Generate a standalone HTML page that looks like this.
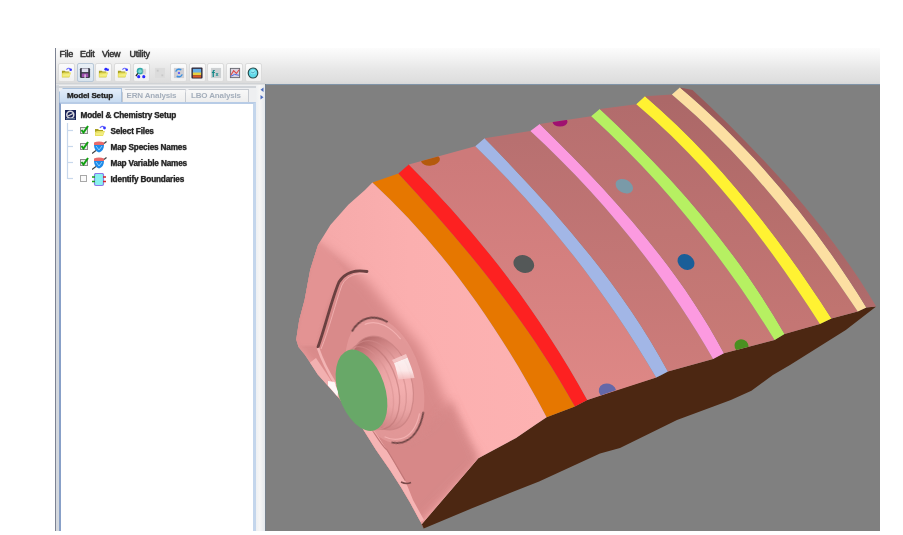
<!DOCTYPE html>
<html><head><meta charset="utf-8">
<style>
html,body{margin:0;padding:0;background:#fff;width:903px;height:535px;overflow:hidden;position:relative;font-family:"Liberation Sans",sans-serif;}
.abs{position:absolute;}
#bar{position:absolute;left:56px;top:48px;width:824px;height:36px;background:linear-gradient(#fcfcfc,#f2f2f2 30%,#e6e6e6 62%,#dedede 92%,#d8d8d8);}
#lb1{position:absolute;left:55px;top:48px;width:1px;height:483px;background:#7c8292;}
#lb2{position:absolute;left:56px;top:84px;width:3px;height:447px;background:#d4d8de;}
.menu{position:absolute;top:49px;font-size:9px;color:#2a2a2a;letter-spacing:-0.25px;-webkit-text-stroke:0.35px #3a3a3a;text-shadow:0 0 1px rgba(0,0,0,0.5);}
.tb{position:absolute;top:63px;width:15px;height:17px;border:1px solid #dcdcdc;border-radius:2px;background:linear-gradient(#fbfbfb,#f0f0f0);}
.tb svg{position:absolute;left:1px;top:2px;}
#view{position:absolute;left:265px;top:85px;width:615px;height:446px;background:#808080;overflow:hidden;}
#vedge{position:absolute;left:265px;top:84px;width:1px;height:447px;background:#76808a;}
#sep{position:absolute;left:56px;top:83px;width:209px;height:2px;background:linear-gradient(#c8ccd0,#e8e8e8);}
#vtop{position:absolute;left:265px;top:84px;width:615px;height:1px;background:#8094a8;}
#tabs{position:absolute;left:56px;top:85px;width:209px;height:446px;background:#eeeff1;}
#split{position:absolute;left:256px;top:85px;width:9px;height:446px;background:linear-gradient(90deg,#eef0f2,#f6f6f6 40%,#e4e8ec);}
.tab{position:absolute;top:89px;height:12px;font-size:8px;font-weight:bold;color:#a4aebb;border:1px solid #c6cad0;border-bottom:none;background:linear-gradient(#f8f8f8,#eeeeee);white-space:nowrap;letter-spacing:-0.15px;}
#panel{position:absolute;left:59px;top:101.5px;width:192px;height:427px;background:#fff;border-left:2px solid #88a0c8;border-top:2px solid #b8cce6;border-right:3px solid #c4d6ec;}
.tr{position:absolute;font-size:8.2px;font-weight:bold;color:#222;white-space:nowrap;letter-spacing:-0.15px;-webkit-text-stroke:0.25px #333;text-shadow:0 0 1px rgba(0,0,0,0.45);}
.ic{position:absolute;}
</style></head><body>
<div id="ui" style="position:absolute;left:0;top:0;width:903px;height:535px;will-change:transform">
<div id="bar"></div>
<div id="lb1"></div>
<div class="menu" style="left:59.5px">File</div>
<div class="menu" style="left:80px">Edit</div>
<div class="menu" style="left:102px">View</div>
<div class="menu" style="left:129.5px">Utility</div>
<div class="tb" style="left:58.0px"><svg width="12" height="12" viewBox="0 0 13 13" style="left:1.5px;top:2.5px"><path d="M1,4 L4,4 L5,5 L9,5 L9,11 L1,11 Z" fill="#a8a020"/><path d="M1,7 L3,6 L11,6 L9,11 L1,11 Z" fill="#e8e060"/><path d="M2,8 L10,7 L9,10 L2,10 Z" fill="#f4f08a" opacity="0.8"/><path d="M6,3 C7,1 9,1 10,2" stroke="#6a6aff" stroke-width="1.3" fill="none"/><circle cx="10.5" cy="3" r="1.4" fill="#3434ff"/></svg></div>
<div class="tb" style="left:76.7px;background:linear-gradient(#eaf0f6,#d8e4ee);border-color:#b8c8d8"><svg width="12" height="12" viewBox="0 0 13 13" style="left:1.5px;top:2.5px"><rect x="1" y="1" width="11" height="11" rx="1.5" fill="#3a3a48"/><rect x="3" y="1.5" width="7" height="4" fill="#e0e0f0"/><rect x="3" y="7" width="7" height="4" fill="#a050b0"/><rect x="6" y="8" width="1.2" height="4" fill="#f0f0f0"/></svg></div>
<div class="tb" style="left:95.3px"><svg width="12" height="12" viewBox="0 0 13 13" style="left:1.5px;top:2.5px"><path d="M1,4 L4,4 L5,5 L9,5 L9,11 L1,11 Z" fill="#a8a020"/><path d="M1,7 L3,6 L11,6 L9,11 L1,11 Z" fill="#e8e060"/><path d="M2,8 L10,7 L9,10 L2,10 Z" fill="#f4f08a" opacity="0.8"/><path d="M6,3 C7,1 9,1 10,2" stroke="#0000" stroke-width="1.3" fill="none"/><circle cx="10.5" cy="3" r="1.4" fill="#3434ff"/><circle cx="8.5" cy="2.5" r="1.6" fill="#2a2aff"/></svg></div>
<div class="tb" style="left:114.0px"><svg width="12" height="12" viewBox="0 0 13 13" style="left:1.5px;top:2.5px"><path d="M1,4 L4,4 L5,5 L9,5 L9,11 L1,11 Z" fill="#a8a020"/><path d="M1,7 L3,6 L11,6 L9,11 L1,11 Z" fill="#e8e060"/><path d="M2,8 L10,7 L9,10 L2,10 Z" fill="#f4f08a" opacity="0.8"/><path d="M6,3 C7,1 9,1 10,2" stroke="#6a6aff" stroke-width="1.3" fill="none"/><circle cx="10.5" cy="3" r="1.4" fill="#3434ff"/></svg></div>
<div class="tb" style="left:132.7px"><svg width="12" height="12" viewBox="0 0 13 13" style="left:1.5px;top:2.5px"><circle cx="5.5" cy="4.5" r="3.6" fill="#30a8a8"/><circle cx="5.5" cy="4.5" r="2" fill="#80d8d0"/><path d="M3,7 L1,10" stroke="#202020" stroke-width="1.4"/><circle cx="4" cy="10.5" r="1.7" fill="#2a2aff"/><circle cx="9.5" cy="10.5" r="1.7" fill="#2a2aff"/><rect x="8" y="2" width="4" height="6" fill="#c8c8c8" opacity="0.6"/></svg></div>
<div class="tb" style="left:151.4px;border-color:transparent;background:transparent"><svg width="12" height="12" viewBox="0 0 13 13" style="left:1.5px;top:2.5px"><rect x="1" y="1" width="11" height="11" fill="#dcdcdc"/><rect x="3" y="3" width="2" height="2" fill="#c8c8c8"/><rect x="8" y="8" width="2" height="2" fill="#c8c8c8"/></svg></div>
<div class="tb" style="left:170.0px"><svg width="12" height="12" viewBox="0 0 13 13" style="left:1.5px;top:2.5px"><rect x="1" y="1" width="11" height="11" fill="#cfcfd4"/><path d="M3,5 C4,2 7,2 9,3" stroke="#3a90e0" stroke-width="1.6" fill="none"/><path d="M10,8 C9,11 6,11 4,10" stroke="#3a90e0" stroke-width="1.6" fill="none"/><circle cx="6.5" cy="6.5" r="1.2" fill="#5050ff"/></svg></div>
<div class="tb" style="left:188.7px"><svg width="12" height="12" viewBox="0 0 13 13" style="left:1.5px;top:2.5px"><rect x="0.5" y="0.5" width="12" height="12" rx="1" fill="#302838"/><rect x="2" y="2" width="9" height="5" fill="#6ab0e8"/><rect x="2" y="6" width="9" height="3" fill="#e8d040"/><rect x="2" y="9" width="9" height="2.5" fill="#d85828"/></svg></div>
<div class="tb" style="left:207.4px"><svg width="12" height="12" viewBox="0 0 13 13" style="left:1.5px;top:2.5px"><rect x="1" y="1" width="11" height="11" fill="#cdd0d2"/><text x="2" y="10.5" font-size="10" font-weight="bold" fill="#108888" font-family="Liberation Sans">f</text><text x="6" y="10" font-size="6" font-weight="bold" fill="#108888" font-family="Liberation Sans">x</text></svg></div>
<div class="tb" style="left:226.0px"><svg width="12" height="12" viewBox="0 0 13 13" style="left:1.5px;top:2.5px"><rect x="1" y="1" width="11" height="11" fill="#686870"/><rect x="2" y="2" width="9" height="9" fill="#d8d4e0"/><path d="M2,9 L5,4 L8,7 L11,3" stroke="#e04848" stroke-width="1.2" fill="none"/><path d="M2,10 L6,8 L11,9" stroke="#4860e0" stroke-width="1" fill="none"/></svg></div>
<div class="tb" style="left:244.7px"><svg width="12" height="12" viewBox="0 0 13 13" style="left:1.5px;top:2.5px"><ellipse cx="6.5" cy="6.5" rx="5.8" ry="6" fill="#284848"/><ellipse cx="6.5" cy="6.5" rx="4.6" ry="4.8" fill="#60d8e8"/><ellipse cx="6.5" cy="5.5" rx="2.8" ry="2.4" fill="#90ecf6"/><path d="M4.5,5.5 L6.5,6.5 L8.5,5" stroke="#3a8aa8" stroke-width="0.8" fill="none"/></svg></div>
<div id="tabs"></div>
<div id="lb2"></div>
<div id="sep"></div>
<div id="split"></div>
<svg class="abs" style="left:258px;top:86px" width="7" height="16"><path d="M5.5,1.5 L2.5,3.8 L5.5,6 Z" fill="#4a6cc0"/><path d="M2.5,9 L5.5,11.3 L2.5,13.5 Z" fill="#4a6cc0"/></svg>
<div class="abs" style="left:56px;top:86px;width:200px;height:2px;background:#cfd3d8"></div>
<div class="tab" style="left:121.5px;width:62px;clip-path:polygon(4px 0,100% 0,100% 100%,0 100%,0 4px)"><span style="position:absolute;left:4px;top:1px">ERN Analysis</span></div>
<div class="tab" style="left:185px;width:62px;clip-path:polygon(4px 0,100% 0,100% 100%,0 100%,0 4px)"><span style="position:absolute;left:5px;top:1px">LBO Analysis</span></div>
<div class="tab" style="left:59px;width:61px;top:88px;clip-path:polygon(4px 0,100% 0,100% 100%,0 100%,0 4px);height:14px;background:linear-gradient(#e4eefa,#c6daf0);color:#1e1e1e;border-color:#a8c0dc;"><span style="position:absolute;left:7px;top:2px;-webkit-text-stroke:0.25px #333;text-shadow:0 0 1px rgba(0,0,0,0.4)">Model Setup</span></div>
<div id="panel"></div>
<svg class="ic" style="left:65px;top:109.5px" width="11" height="10" viewBox="0 0 11 10"><rect x="0" y="0" width="11" height="10" fill="#1c2458"/><circle cx="5.3" cy="4.8" r="3.5" fill="none" stroke="#d8d8e0" stroke-width="1.5"/><path d="M3,6 L8,3.5" stroke="#e0e0e0" stroke-width="1.2"/><rect x="1" y="8" width="9" height="1.5" fill="#607090"/></svg>
<div class="tr" style="left:80.5px;top:111px">Model &amp; Chemistry Setup</div>
<svg class="ic" style="left:60px;top:120px" width="20" height="62"><path d="M7.5,3 L7.5,59" stroke="#c8d8ec" stroke-width="1.2"/><path d="M8,10.5 L13,10.5" stroke="#c8d8ec" stroke-width="1.2"/><path d="M8,26.5 L13,26.5" stroke="#c8d8ec" stroke-width="1.2"/><path d="M8,42.5 L13,42.5" stroke="#c8d8ec" stroke-width="1.2"/><path d="M8,58.5 L13,58.5" stroke="#c8d8ec" stroke-width="1.2"/></svg>
<svg class="ic" style="left:79.5px;top:125px" width="9" height="9" viewBox="0 0 9 9"><rect x="0.5" y="2.5" width="7" height="6" fill="#e8e8e8" stroke="#8c8c8c" stroke-width="1"/><path d="M1.5,5 L3.5,7.5 L8,1" stroke="#10a010" stroke-width="2" fill="none"/></svg>
<svg class="ic" style="left:94px;top:125px" width="13" height="13" viewBox="0 0 13 13"><path d="M1,4 L4,4 L5,5 L9,5 L9,11 L1,11 Z" fill="#a8a020"/><path d="M1,7 L3,6 L11,6 L9,11 L1,11 Z" fill="#e8e060"/><path d="M2,8 L10,7 L9,10 L2,10 Z" fill="#f4f08a" opacity="0.8"/><path d="M6,3 C7,1 9,1 10,2" stroke="#6a6aff" stroke-width="1.3" fill="none"/><circle cx="10.5" cy="3" r="1.4" fill="#3434ff"/></svg>
<div class="tr" style="left:110.5px;top:126.8px">Select Files</div>
<svg class="ic" style="left:79.5px;top:141px" width="9" height="9" viewBox="0 0 9 9"><rect x="0.5" y="2.5" width="7" height="6" fill="#e8e8e8" stroke="#8c8c8c" stroke-width="1"/><path d="M1.5,5 L3.5,7.5 L8,1" stroke="#10a010" stroke-width="2" fill="none"/></svg>
<svg class="ic" style="left:92px;top:140.5px" width="15" height="14" viewBox="0 0 15 14"><path d="M2,1.5 C5,0 9,0 12,1.5 L12,4 L2,4 Z" fill="#e86a6a"/><path d="M2,4 L12,4 C12,8 10,10.5 7,11.5 C4,10.5 2,8 2,4 Z" fill="#1f8ae8"/><path d="M4,5 L7,9 L10,5" stroke="#8ad0ff" stroke-width="1" fill="none"/><path d="M0,12.5 L4,9.5" stroke="#404040" stroke-width="1.2"/><path d="M12,2.5 L14.5,0.5" stroke="#404040" stroke-width="1.2"/></svg>
<div class="tr" style="left:110.5px;top:142.8px">Map Species Names</div>
<svg class="ic" style="left:79.5px;top:157px" width="9" height="9" viewBox="0 0 9 9"><rect x="0.5" y="2.5" width="7" height="6" fill="#e8e8e8" stroke="#8c8c8c" stroke-width="1"/><path d="M1.5,5 L3.5,7.5 L8,1" stroke="#10a010" stroke-width="2" fill="none"/></svg>
<svg class="ic" style="left:92px;top:156.5px" width="15" height="14" viewBox="0 0 15 14"><path d="M2,1.5 C5,0 9,0 12,1.5 L12,4 L2,4 Z" fill="#e86a6a"/><path d="M2,4 L12,4 C12,8 10,10.5 7,11.5 C4,10.5 2,8 2,4 Z" fill="#1f8ae8"/><path d="M4,5 L7,9 L10,5" stroke="#8ad0ff" stroke-width="1" fill="none"/><path d="M0,12.5 L4,9.5" stroke="#404040" stroke-width="1.2"/><path d="M12,2.5 L14.5,0.5" stroke="#404040" stroke-width="1.2"/></svg>
<div class="tr" style="left:110.5px;top:158.8px">Map Variable Names</div>
<svg class="ic" style="left:79.5px;top:173px" width="9" height="9" viewBox="0 0 9 9"><rect x="0.5" y="2.5" width="6" height="6" fill="#fafafa" stroke="#a8a8a8" stroke-width="1"/></svg>
<svg class="ic" style="left:92px;top:172.5px" width="15" height="14" viewBox="0 0 15 14"><rect x="2.5" y="0.5" width="9" height="12" rx="1.5" fill="#88f0f0" stroke="#8a7ae8" stroke-width="1.2"/><path d="M0,4 L3,4 M0,8.5 L3,8.5" stroke="#18a018" stroke-width="1.6"/><path d="M11,4 L14,4 M11,8.5 L14,8.5" stroke="#d02828" stroke-width="1.6"/></svg>
<div class="tr" style="left:110.5px;top:174.8px">Identify Boundaries</div>
</div>
<div id="view"></div>
<div id="vtop"></div>
<svg class="abs" style="left:0;top:0" width="903" height="535" viewBox="0 0 903 535">
<defs><clipPath id="vc"><rect x="265" y="85" width="615" height="446"/></clipPath></defs>
<g clip-path="url(#vc)">
<polygon points="421.5,524.5 478.3,458.3 516,438 535,425 546.6,417.3 574.9,406.5 587.3,399.9 616.4,389.9 656.2,377.5 661.6,375 667.9,371.6 713.1,359 723.9,353.2 774.6,340 784.5,334.1 800,329.4 819.9,323.9 831.4,318.4 857.8,311.4 866.3,307.4 876.2,306.4 876.2,306.4 845.8,330 790,364.9 772.9,375 751.4,390.8 730.9,400 677,420 620,448 600,453.6 539.1,481.4 466.7,510.4 423.7,528.6" fill="#4c2712"/>
<defs><linearGradient id="sg3" gradientUnits="userSpaceOnUse" x1="0" y1="160" x2="0" y2="400"><stop offset="0" stop-color="#cd7a7a"/><stop offset="1" stop-color="#de8886"/></linearGradient><linearGradient id="sg5" gradientUnits="userSpaceOnUse" x1="0" y1="140" x2="0" y2="370"><stop offset="0" stop-color="#b87070"/><stop offset="1" stop-color="#cd7c7a"/></linearGradient><linearGradient id="sg7" gradientUnits="userSpaceOnUse" x1="0" y1="120" x2="0" y2="345"><stop offset="0" stop-color="#b87070"/><stop offset="1" stop-color="#c87a76"/></linearGradient><linearGradient id="sg9" gradientUnits="userSpaceOnUse" x1="0" y1="105" x2="0" y2="325"><stop offset="0" stop-color="#b26c6c"/><stop offset="1" stop-color="#c47674"/></linearGradient><linearGradient id="sg11" gradientUnits="userSpaceOnUse" x1="0" y1="100" x2="0" y2="310"><stop offset="0" stop-color="#ac6868"/><stop offset="1" stop-color="#c07470"/></linearGradient><linearGradient id="sg13" gradientUnits="userSpaceOnUse" x1="0" y1="90" x2="0" y2="305"><stop offset="0" stop-color="#985858"/><stop offset="1" stop-color="#b06c6c"/></linearGradient></defs>
<path d="M372.4,182.4 C444.3,248.7 500.8,330.7 546.6,417.3 L574.9,406.5 C527.3,320.8 464.8,244.7 398.4,173.4 Z" fill="#e67700"/>
<path d="M398.4,173.4 C464.8,244.7 527.3,320.8 574.9,406.5 L587.3,399.9 C539.8,313.1 479.0,234.1 408.8,164.5 Z" fill="#fd2121"/>
<path d="M408.8,164.5 C479.0,234.1 539.8,313.1 587.3,399.9 L656.2,377.5 C606.4,292.6 546.1,214.9 475.3,146.3 Z" fill="url(#sg3)"/>
<path d="M475.3,146.3 C546.1,214.9 606.4,292.6 656.2,377.5 L667.9,371.6 C621.7,285.1 554.0,208.9 484.6,138.3 Z" fill="#a2b6e6"/>
<path d="M484.6,138.3 C554.0,208.9 621.7,285.1 667.9,371.6 L713.1,359.0 C664.4,273.8 602.4,197.4 530.4,131.0 Z" fill="url(#sg5)"/>
<path d="M530.4,131.0 C602.4,197.4 664.4,273.8 713.1,359.0 L723.9,353.2 C677.5,266.0 610.0,192.3 539.7,124.0 Z" fill="#fc9ae0"/>
<path d="M539.7,124.0 C610.0,192.3 677.5,266.0 723.9,353.2 L774.6,340.0 C723.8,257.6 662.4,180.7 591.2,116.3 Z" fill="url(#sg7)"/>
<path d="M591.2,116.3 C662.4,180.7 723.8,257.6 774.6,340.0 L784.5,334.1 C736.1,249.2 671.0,174.9 599.8,109.0 Z" fill="#b6f062"/>
<path d="M599.8,109.0 C671.0,174.9 736.1,249.2 784.5,334.1 L819.9,323.9 C768.4,243.8 709.8,165.7 636.3,104.3 Z" fill="url(#sg9)"/>
<path d="M636.3,104.3 C709.8,165.7 768.4,243.8 819.9,323.9 L831.4,318.4 C778.9,236.8 718.9,159.6 645.0,96.3 Z" fill="#fff232"/>
<path d="M645.0,96.3 C718.9,159.6 778.9,236.8 831.4,318.4 L857.8,311.4 C804.6,232.0 744.9,156.3 671.9,94.6 Z" fill="url(#sg11)"/>
<path d="M671.9,94.6 C744.9,156.3 804.6,232.0 857.8,311.4 L866.3,307.4 C816.0,225.4 753.6,149.4 679.9,87.6 Z" fill="#fcdfa2"/>
<path d="M679.9,87.6 C753.6,149.4 816.0,225.4 866.3,307.4 L876.2,306.4 C828.1,225.4 761.4,153.9 692.5,90.0 Z" fill="url(#sg13)"/>
<defs><clipPath id="ts"><path d="M372.4,182.4 C444.3,248.7 500.8,330.7 546.6,417.3 L574.9,406.5 L587.3,399.9 L616.4,389.9 L656.2,377.5 L661.6,375 L667.9,371.6 L713.1,359 L723.9,353.2 L774.6,340 L784.5,334.1 L800,329.4 L819.9,323.9 L831.4,318.4 L857.8,311.4 L866.3,307.4 L876.2,306.4 L876.2,306.4 C828.1,225.4 761.4,153.9 692.5,90.0 L679.9,87.6 L671.9,94.6 L645,96.3 L636.3,104.3 L599.8,109 L591.2,116.3 L539.7,124 L530.4,131 L484.6,138.3 L475.3,146.3 L408.8,164.5 L398.4,173.4 Z"/></clipPath></defs>
<defs><linearGradient id="ff" x1="0" y1="0" x2="1" y2="0" gradientUnits="objectBoundingBox"><stop offset="0" stop-color="#f4a8a8"/><stop offset="0.45" stop-color="#fbafaf"/><stop offset="1" stop-color="#fdb2b2"/></linearGradient></defs>
<path d="M372.4,182.4 L365,190 L348.3,204.7 L330.4,224.9 L318,245 L310.2,269.8 L304.6,300 L299.2,320 L296.2,339.4 L298.5,346.9 L305,355 L310,362.6 L317.8,374.4 L327,384.8 L338.8,397.9 L349.2,412.3 L362.3,428 L376.1,450 L390,470 L400.7,486.8 L409.9,502.2 L420.6,522.1 L423.7,528.3 L421.5,524.5 L478.3,458.3 L516,438 L535,425 L546.6,417.3 L546.6,417.3 C500.8,330.7 444.3,248.7 372.4,182.4 Z" fill="url(#ff)"/>
<defs><filter id="bl4" x="-20%" y="-20%" width="140%" height="140%"><feGaussianBlur stdDeviation="4"/></filter><filter id="bl2" x="-20%" y="-20%" width="140%" height="140%"><feGaussianBlur stdDeviation="1.5"/></filter><filter id="bl1" x="-20%" y="-20%" width="140%" height="140%"><feGaussianBlur stdDeviation="0.7"/></filter><clipPath id="fc"><path d="M372.4,182.4 L365,190 L348.3,204.7 L330.4,224.9 L318,245 L310.2,269.8 L304.6,300 L299.2,320 L296.2,339.4 L298.5,346.9 L305,355 L310,362.6 L317.8,374.4 L327,384.8 L338.8,397.9 L349.2,412.3 L362.3,428 L376.1,450 L390,470 L400.7,486.8 L409.9,502.2 L420.6,522.1 L423.7,528.3 L421.5,524.5 L478.3,458.3 L516,438 L535,425 L546.6,417.3 L546.6,417.3 C500.8,330.7 444.3,248.7 372.4,182.4 Z"/></clipPath></defs>
<g clip-path="url(#fc)">
<defs><filter id="bl6" x="-20%" y="-20%" width="140%" height="140%"><feGaussianBlur stdDeviation="6"/></filter></defs>
<polygon points="296,236 318,243 345,262 368,282 397,318 420,345 436,378 450,410 464,440 478,460 415,530 390,475 360,425 330,385 292,345 286,300" fill="#d98a8a" filter="url(#bl6)"/>
<polygon points="350,425 386,475 412,525 478,460 465,430 451,400 430,425 405,440" fill="#d68888" opacity="0.9" filter="url(#bl4)"/>
<polygon points="318,242 332,256 350,275 338,282 326,310 317,346 300,346 296,338 304,296 310,268" fill="#e49494" opacity="0.85" filter="url(#bl2)"/>
</g>
<path d="M310,362.6 L317.8,374.4 L327,384.8 L338.8,397.9 L342,396 L332,382 L324,370 L316,358 Z" fill="#f2b0b0" filter="url(#bl1)"/>
<path d="M367,271.5 C356,269.5 345,272 339,282 C332,298 325,328 318,347" fill="none" stroke="#6a4040" stroke-width="2.8" stroke-linecap="round"/>
<path d="M368,274 C357,272.5 347,275 342,285 C336,301 329,330 321,349" fill="none" stroke="#f4b6b6" stroke-width="1" opacity="0.8"/>
<path d="M318,348 C322,360 328,372 336,385" fill="none" stroke="#f2b4b4" stroke-width="2.5" filter="url(#bl1)"/>
<path d="M362.3,428 L376.1,450 L390,470 L400.7,486.8 L409.9,502.2 L420.6,522.1 L424,520 L413,500 L405.3,480.7 L386.9,450 L370,424 L365,421 Z" fill="#f6b4b4" filter="url(#bl1)"/>
<path d="M368,423 C376,436 382,446 387,450 C394,461 400,472 405.3,480.7" fill="none" stroke="#c27878" stroke-width="1.2" filter="url(#bl1)"/>
<path d="M401,482 C404,483.5 408,484 411,482.5" fill="none" stroke="#7a4a4a" stroke-width="1.5"/>
<defs><radialGradient id="cyl" gradientUnits="userSpaceOnUse" cx="402" cy="392" r="62"><stop offset="0" stop-color="#f4b0b0"/><stop offset="0.4" stop-color="#eaa4a4"/><stop offset="0.75" stop-color="#cf8484"/><stop offset="1" stop-color="#b46a6a"/></radialGradient><linearGradient id="hl" x1="0" y1="0" x2="0" y2="1"><stop offset="0" stop-color="#ffffff"/><stop offset="0.6" stop-color="#fff4f4"/><stop offset="1" stop-color="#f4c0c0"/></linearGradient></defs>
<ellipse cx="384.8" cy="380.4" rx="36.8" ry="64.4" transform="rotate(-16 384.8 380.4)" fill="#eaa2a2" opacity="0.55"/>
<ellipse cx="384.8" cy="380.4" rx="36.8" ry="64.4" transform="rotate(-16 384.8 380.4)" fill="none" stroke="#6e4444" stroke-width="1.8" stroke-dasharray="0 42 50 130 42 66" filter="url(#bl1)"/>
<ellipse cx="384.3" cy="381" rx="34" ry="60" transform="rotate(-16 384.3 381)" fill="none" stroke="#f6b6b6" stroke-width="1.2" stroke-dasharray="0 42 50 130 42 66" opacity="0.8"/>
<ellipse cx="381.5" cy="383" rx="30" ry="48" transform="rotate(-16.6 381.5 383)" fill="url(#cyl)"/>
<ellipse cx="381.5" cy="383" rx="30" ry="48" transform="rotate(-16.6 381.5 383)" fill="none" stroke="#c88080" stroke-width="1.2" opacity="0.7"/>
<ellipse cx="376.7" cy="384.8" rx="27.5" ry="45.5" transform="rotate(-17.5 376.7 384.8)" fill="none" stroke="#d08a8a" stroke-width="1.3" opacity="0.6"/>
<ellipse cx="371.9" cy="386.6" rx="25.5" ry="44" transform="rotate(-17.5 371.9 386.6)" fill="none" stroke="#b87070" stroke-width="1.3" opacity="0.5"/>
<ellipse cx="367.1" cy="388.4" rx="24.2" ry="43" transform="rotate(-17.5 367.1 388.4)" fill="none" stroke="#d89090" stroke-width="1.3" opacity="0.5"/>
<path d="M394,363 L407.5,357.5 C410,364 413,371 414.5,378 L398.5,379.5 C397,373 396,368 394,363 Z" fill="url(#hl)" filter="url(#bl1)" opacity="0.85"/><path d="M392,360 L406,354 L407.5,357.5 L394,363 Z" fill="#f8d0d0" filter="url(#bl1)" opacity="0.8"/>
<ellipse cx="361.5" cy="390.2" rx="23.4" ry="42.2" transform="rotate(-18.4 361.5 390.2)" fill="#68a868"/>
<path d="M328,381 L334.5,382 L338,392 L337.5,396.5 L328,385.5 Z" fill="#ffffff" opacity="0.9" filter="url(#bl1)"/>
<g clip-path="url(#ts)">
<ellipse cx="430.5" cy="160" rx="9.5" ry="5.6" transform="rotate(-8 430.5 160)" fill="#b45a0c"/>
<ellipse cx="523.8" cy="264" rx="10.6" ry="8.6" transform="rotate(22 523.8 264)" fill="#545858"/>
<ellipse cx="560" cy="121.8" rx="7.5" ry="4.8" fill="#a01070"/>
<ellipse cx="624.3" cy="186.2" rx="9.3" ry="6.6" transform="rotate(28 624.3 186.2)" fill="#7a9aa8"/>
<ellipse cx="686" cy="262" rx="9" ry="7.4" transform="rotate(38 686 262)" fill="#1a5e98"/>
<ellipse cx="607.5" cy="391" rx="8.8" ry="7.5" transform="rotate(15 607.5 391)" fill="#6468a8"/>
<ellipse cx="741.5" cy="346" rx="7.2" ry="6.5" transform="rotate(25 741.5 346)" fill="#4a9020"/>
</g>
</g>
</svg>
<div id="vedge"></div>
</body></html>
